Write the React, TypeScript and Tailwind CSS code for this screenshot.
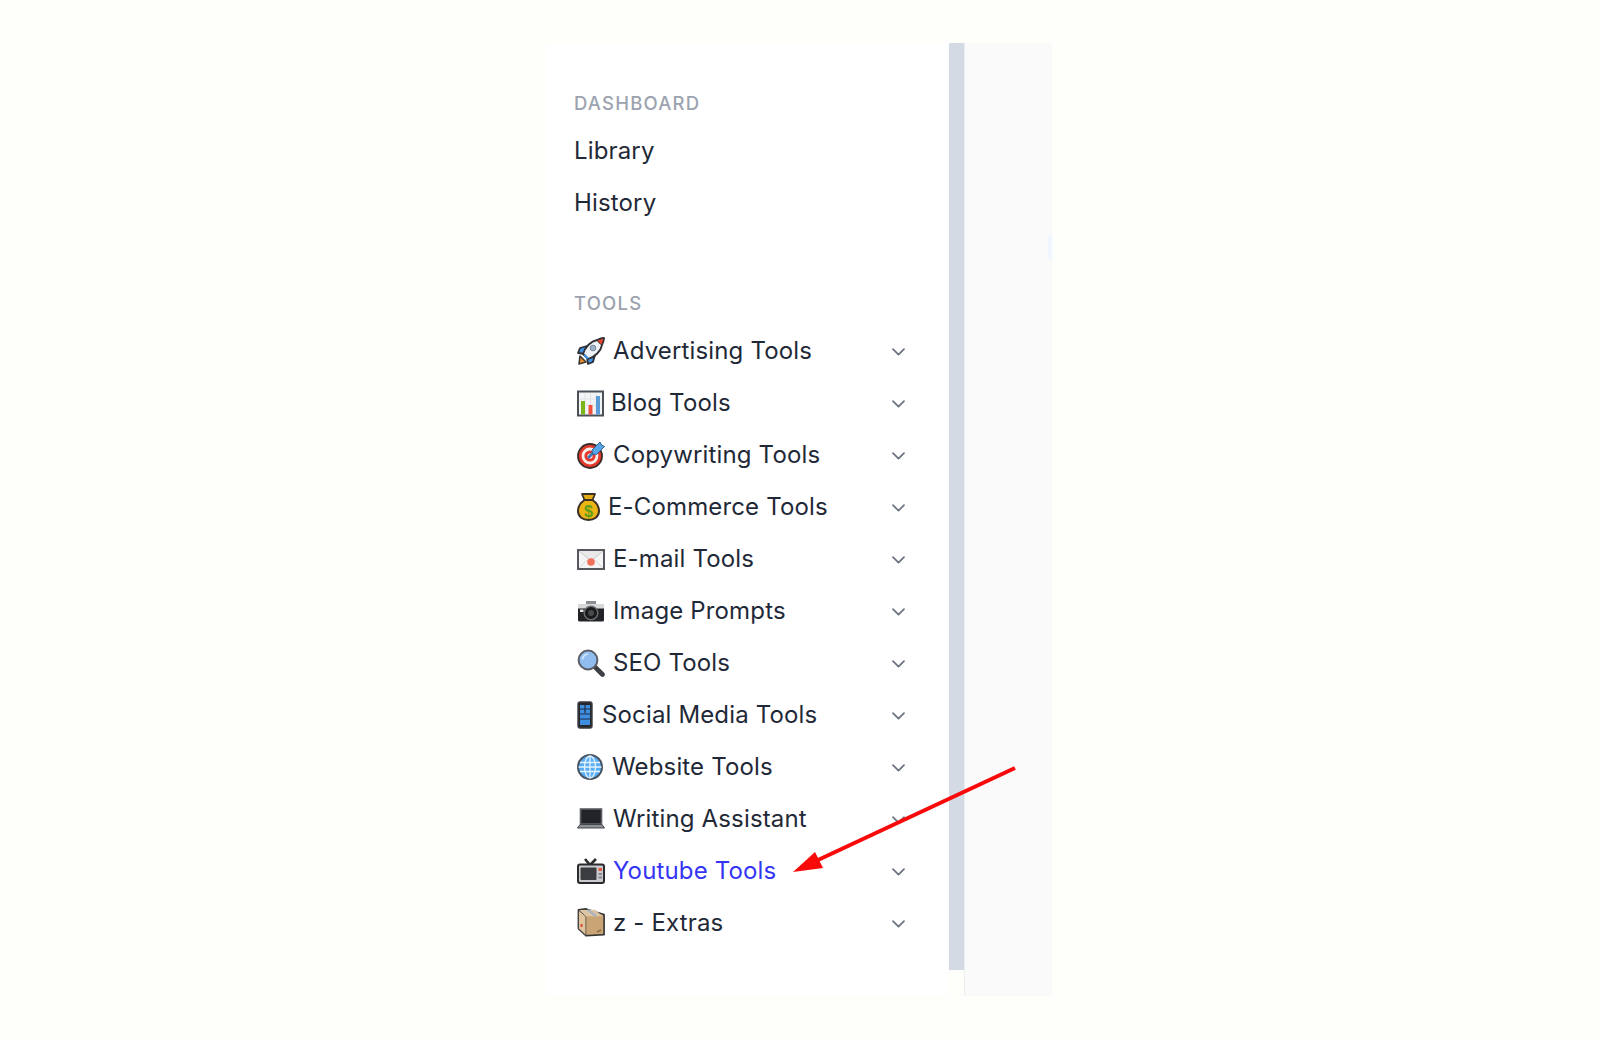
import React from 'react';

const Rocket = () => (
  <svg width="28" height="28" viewBox="0 0 28 28">
    <path d="M2 27l1-8 6 6z" fill="#f08a24" stroke="#3a3a3a" strokeWidth="1.6" strokeLinejoin="round" />
    <path d="M10 9L3 11l-2 5 7 1z" fill="#3f94e6" stroke="#2f2f33" strokeWidth="1.8" strokeLinejoin="round" />
    <path d="M18 18l-2 7-5 2-1-7z" fill="#3f94e6" stroke="#2f2f33" strokeWidth="1.8" strokeLinejoin="round" />
    <path d="M6 17C8 10 14 4 20 3c2-1 6-2 7-2 0 1-1 5-2 7-1 6-7 12-14 14z" fill="#eef2f6" stroke="#2f2f33" strokeWidth="1.8" strokeLinejoin="round" />
    <path d="M20 3l7-2-2 7c-2-1-4-3-5-5z" fill="#e8442e" stroke="#2f2f33" strokeWidth="1" strokeLinejoin="round" />
    <circle cx="16" cy="11" r="2.8" fill="#9fb4c6" stroke="#71839a" strokeWidth="1" />
    <path d="M7.500 18l3.500 3.500" stroke="#3f94e6" strokeWidth="2.400" />
  </svg>
);

const Chart = () => (
  <svg width="27" height="27" viewBox="0 0 27 27">
    <rect x="1" y="1.500" width="25" height="24" fill="#f3f4f6" stroke="#4b5058" strokeWidth="2" />
    <path d="M8 3v21M13.500 3v21M19 3v21M3 9h21M3 15h21" stroke="#dfe2e6" strokeWidth="1" />
    <rect x="4" y="11" width="4" height="13.500" fill="#7cb518" />
    <rect x="11.500" y="15" width="4" height="9.500" fill="#f0503c" />
    <rect x="19" y="6" width="4" height="18.500" fill="#5b9bd8" />
  </svg>
);

const Target = () => (
  <svg width="28" height="28" viewBox="0 0 28 28">
    <circle cx="13" cy="15" r="12" fill="#e5392c" stroke="#3b2a2a" strokeWidth="1.800" />
    <circle cx="13" cy="15" r="8.400" fill="#f8f1ee" />
    <circle cx="13" cy="15" r="5.600" fill="#e5392c" />
    <circle cx="13" cy="15" r="2.600" fill="#f8f1ee" />
    <path d="M11 17L21 7" stroke="#3f78b8" strokeWidth="3" />
    <path d="M15 9l8-8 1.500 3 3 1.500-8 8-4-.5z" fill="#58a6e8" stroke="#2f5f8f" strokeWidth="1" strokeLinejoin="round" />
  </svg>
);

const MoneyBag = () => (
  <svg width="23" height="28" viewBox="0 0 23 28">
    <path d="M5 1h13l-2.500 6h-8z" fill="#e6ad12" stroke="#3a3226" strokeWidth="1.800" strokeLinejoin="round" />
    <path d="M7.500 7h8C20 10 22 14 22 18c0 6-5 9-10.500 9S1 24 1 18c0-4 2-8 6.500-11z" fill="#ecb414" stroke="#3a3226" strokeWidth="2" strokeLinejoin="round" />
    <text x="11.500" y="23.500" textAnchor="middle" fontFamily="Liberation Sans, sans-serif" fontWeight="700" fontSize="16" fill="#5f9e1a">$</text>
  </svg>
);

const Mail = () => (
  <svg width="28" height="21" viewBox="0 0 28 21">
    <rect x="1" y="1" width="26" height="19" fill="#f4f4f4" stroke="#55585c" strokeWidth="2" />
    <path d="M2 2l12 10L26 2" fill="#e9e9e9" stroke="#c9c9c9" strokeWidth="1" />
    <path d="M2 19l8-8M26 19l-8-8" stroke="#d5d5d5" strokeWidth="1" />
    <circle cx="14" cy="13" r="3.800" fill="#f0705a" />
  </svg>
);

const Camera = () => (
  <svg width="28" height="22" viewBox="0 0 28 22">
    <path d="M9 1h10v4H9z" fill="#8b8f94" />
    <rect x="1" y="4" width="26" height="17.500" rx="1.500" fill="#222326" />
    <rect x="1" y="4" width="26" height="4.500" fill="#d7d8da" />
    <circle cx="14" cy="13" r="6.800" fill="#1a1a1c" stroke="#6b6e72" strokeWidth="1.400" />
    <circle cx="14" cy="13" r="3" fill="#47494c" />
    <rect x="3" y="9.500" width="3.500" height="2.500" fill="#e5e5e5" />
  </svg>
);

const Search = () => (
  <svg width="28" height="28" viewBox="0 0 28 28">
    <path d="M17 17l8.500 8.500" stroke="#3c4045" strokeWidth="4.600" strokeLinecap="round" />
    <circle cx="11" cy="11" r="9.400" fill="#8fbdf0" stroke="#5b5f65" strokeWidth="2" />
    <path d="M5.500 10c.6-3 2.500-4.500 5-5" stroke="#d6e8fb" strokeWidth="1.600" fill="none" strokeLinecap="round" />
  </svg>
);

const Phone = () => (
  <svg width="16" height="28" viewBox="0 0 16 28">
    <rect x="1" y="1" width="14" height="26" rx="2" fill="#25272b" stroke="#3a3d42" strokeWidth="1.400" />
    <rect x="3" y="4" width="10" height="20" fill="#3f8fe0" />
    <path d="M3 8h10M3 13h10M3 18h10M8 4v8" stroke="#1e2a44" strokeWidth="1.200" />
  </svg>
);

const Globe = () => (
  <svg width="26" height="26" viewBox="0 0 26 26">
    <circle cx="13" cy="13" r="12" fill="#5aaef5" stroke="#4a5360" strokeWidth="2" />
    <ellipse cx="13" cy="13" rx="5.500" ry="11" fill="none" stroke="#e3f2ff" strokeWidth="1.300" />
    <path d="M3 8.500h20M1.500 13h23M3 17.500h20M13 2v22" stroke="#e3f2ff" strokeWidth="1.300" />
  </svg>
);

const Laptop = () => (
  <svg width="28" height="21" viewBox="0 0 28 21">
    <rect x="3.500" y="1" width="21" height="15" fill="#232428" stroke="#5b5e63" strokeWidth="1.600" />
    <path d="M3 16.500h22l2.500 3.500H.5z" fill="#8d9095" stroke="#45484d" strokeWidth="1" strokeLinejoin="round" />
  </svg>
);

const Tv = () => (
  <svg width="28" height="26" viewBox="0 0 28 26">
    <path d="M8 1l5 6 6-6" fill="none" stroke="#2b2b2e" strokeWidth="2.600" />
    <rect x="1" y="6.500" width="26" height="18.500" rx="2" fill="#c9cbce" stroke="#2b2b2e" strokeWidth="2" />
    <rect x="3.500" y="9.500" width="16" height="12.500" rx="1" fill="#3b3c40" />
    <rect x="21.500" y="10" width="3.500" height="3" fill="#e8583c" />
    <rect x="21.500" y="15" width="3.500" height="2" fill="#85888c" />
    <rect x="21.500" y="18.500" width="3.500" height="2" fill="#85888c" />
  </svg>
);

const Box = () => (
  <svg width="28" height="29" viewBox="0 0 28 29">
    <path d="M1.500 2L9 1l18 5.500v20L9 27.500l-7.500-7z" fill="#c9a77a" stroke="#333" strokeWidth="1.800" strokeLinejoin="round" />
    <path d="M1.500 2L9 8.500v19l-7.500-7z" fill="#e0c49c" stroke="#444" strokeWidth="1" strokeLinejoin="round" />
    <path d="M2.500 2L9 8.500h17L18 1.800z" fill="#dcc5a5" />
    <path d="M9.500 8.500H26.200v17.500L9.500 26.800z" fill="#c9a474" />
    <path d="M11 2l8 6" stroke="#a9b4bd" strokeWidth="2.400" />
    <rect x="3.500" y="16" width="2" height="3" fill="#d9483a" />
    <path d="M20 24l4-2" stroke="#8a6d48" strokeWidth="1.400" />
  </svg>
);

const Chevron = () => (
  <svg className="mt-[2px]" width="13" height="8" viewBox="0 0 13 8" fill="none">
    <path d="M1 1.200l5.500 5.500 5.500-5.500" stroke="#6b7280" strokeWidth="1.700" strokeLinecap="round" strokeLinejoin="round" />
  </svg>
);

const tools = [
  { name: 'Advertising Tools', icon: <Rocket />, box: 'w-[39px]' },
  { name: 'Blog Tools', icon: <Chart />, box: 'w-[37px]' },
  { name: 'Copywriting Tools', icon: <Target />, box: 'w-[39px]' },
  { name: 'E-Commerce Tools', icon: <MoneyBag />, box: 'w-[34px]' },
  { name: 'E-mail Tools', icon: <Mail />, box: 'w-[39px]' },
  { name: 'Image Prompts', icon: <Camera />, box: 'w-[39px]' },
  { name: 'SEO Tools', icon: <Search />, box: 'w-[39px]' },
  { name: 'Social Media Tools', icon: <Phone />, box: 'w-[28px]' },
  { name: 'Website Tools', icon: <Globe />, box: 'w-[38px]' },
  { name: 'Writing Assistant', icon: <Laptop />, box: 'w-[39px]' },
  { name: 'Youtube Tools', icon: <Tv />, box: 'w-[39px]', active: true },
  { name: 'z - Extras', icon: <Box />, box: 'w-[39px]' },
];

export default function App() {
  return (
    <div className="min-h-[1040px] bg-[#fefffb] pl-[546px] pt-[43px] font-['Inter',sans-serif]">
      <div className="relative flex h-[953px] w-[506px] overflow-hidden">
        <aside className="w-[403px] bg-white pl-[28px] pr-[44px] pt-[50px]">
          <h3 className="h-[20px] text-[18.5px] leading-[20px] font-medium tracking-[1.2px] text-[#9ca3af]">DASHBOARD</h3>
          <nav className="mt-[12px] flex flex-col">
            <a className="flex h-[52px] items-center text-[24px] tracking-[0.15px] text-[#1f2937]">Library</a>
            <a className="flex h-[52px] items-center text-[24px] tracking-[0.15px] text-[#1f2937]">History</a>
          </nav>
          <h3 className="mt-[64px] h-[20px] text-[18.5px] leading-[20px] font-medium tracking-[1.2px] text-[#9ca3af]">TOOLS</h3>
          <ul className="mt-[12.5px] flex flex-col">
            {tools.map((t) => (
              <li key={t.name} className="flex h-[51.95px] items-center justify-between">
                <div className={`flex items-center ${t.active ? 'text-[#3535f5]' : 'text-[#1f2937]'}`}>
                  <span className={`flex items-center pl-[3px] ${t.box}`}>{t.icon}</span>
                  <span className="text-[24px] tracking-[0.15px]">{t.name}</span>
                </div>
                <Chevron />
              </li>
            ))}
          </ul>
        </aside>
        <div className="h-[927px] w-[15px] bg-[#d3dae3]" />
        <div className="flex-1 border-l border-[#eceef2] bg-[#fafafb]" />
        <span className="absolute left-[502px] top-[190px] h-[28px] w-[14px] rounded-full bg-[#eff6ff]" />
      </div>
      <svg className="absolute left-[780px] top-[755px]" width="250" height="125" viewBox="0 0 250 125" fill="none">
        <path d="M235 13L38 105" stroke="#f80a0a" strokeWidth="4" />
        <path d="M13 117L35 97l8 16z" fill="#f80a0a" />
      </svg>
    </div>
  );
}
